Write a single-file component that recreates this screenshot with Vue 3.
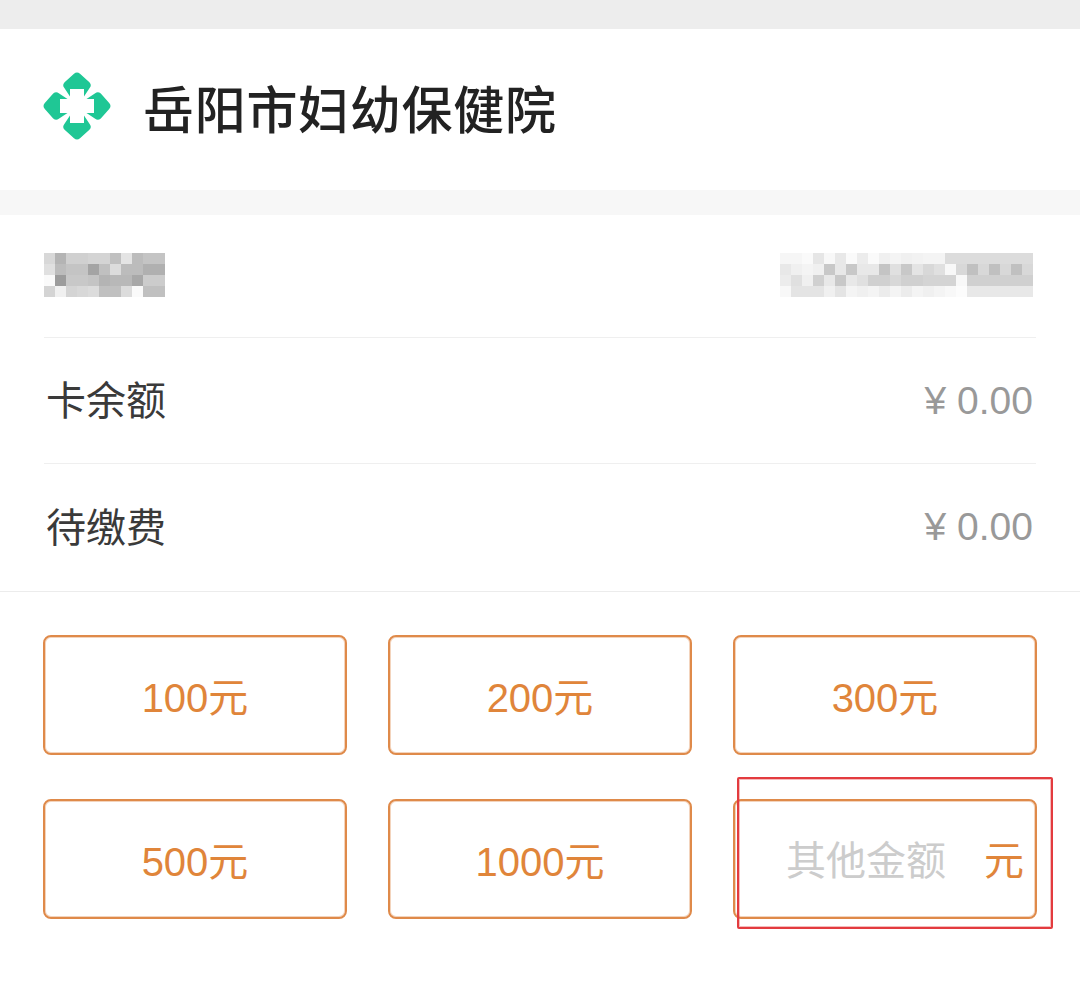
<script setup>
const leftMosaic = [
  ['d8','b4','d0','d0','d4','d4','c0','e4','bc','c4','c4'],
  ['e0','bc','c4','c4','a4','c0','dc','bc','bc','b0','b0'],
  ['fa','9c','c8','c8','c4','b4','b8','b8','a8','cc','cc'],
  ['d4','f0','d4','d8','dc','c0','c0','dc','fa','c0','c0'],
]
const rightMosaic = [
  ['f6','f6','fa','e6','f8','e8','fa','ec','fa','f0','f4','f0','f2','f4','f4','dc','dc','dc','dc','dc','dc','dc','dc'],
  ['e8','f0','f4','f0','c8','e8','c8','e8','e8','c4','e0','c8','e4','d8','e0','f8','d8','c0','d8','c0','d8','c0','d8'],
  ['ec','e0','f0','d0','e8','c8','e8','e0','d0','d0','d8','d0','d0','d4','d4','d4','f8','d0','d0','d0','d0','d0','d0'],
  ['f8','e4','e4','e4','f0','e4','f4','f0','f4','ec','f4','ec','f4','f0','f4','f8','fc','e8','e8','e8','e8','e8','e8'],
]
const amounts = ['100元', '200元', '300元', '500元', '1000元']
const petalAngles = [0, 90, 180, 270]
const cellColor = (v) => '#' + v + v + v
</script>

<template>
  <div class="page">
    <div class="topbar"></div>
    <header class="hospital">
      <svg class="logo" viewBox="0 0 80 80" aria-hidden="true">
        <path
          v-for="a in petalAngles"
          :key="a"
          :transform="`rotate(${a} 40 40)`"
          d="M40 6.5 Q41.6 6.5 43 7.8 L52.4 16.2 Q55 19 52.8 21.8 L47 30.5 L47 23 L33 23 L33 30.5 L27.2 21.8 Q25 19 27.6 16.2 L37 7.8 Q38.4 6.5 40 6.5 Z"
          fill="#1fc795"
        />
      </svg>
      <h1 class="name">岳阳市妇幼保健院</h1>
    </header>
    <div class="band"></div>
    <section class="info">
      <div class="row first">
        <div class="mosaic">
          <div v-for="(r, i) in leftMosaic" :key="i" class="mrow">
            <i v-for="(c, j) in r" :key="j" class="cell" :style="{ background: cellColor(c) }"></i>
          </div>
        </div>
        <div class="mosaic">
          <div v-for="(r, i) in rightMosaic" :key="i" class="mrow">
            <i v-for="(c, j) in r" :key="j" class="cell" :style="{ background: cellColor(c) }"></i>
          </div>
        </div>
      </div>
      <div class="row">
        <span class="label">卡余额</span>
        <span class="value">¥ 0.00</span>
      </div>
      <div class="row last">
        <span class="label">待缴费</span>
        <span class="value">¥ 0.00</span>
      </div>
    </section>
    <section class="amounts">
      <button v-for="a in amounts" :key="a" class="amount" type="button">{{ a }}</button>
      <div class="amount custom">
        <span class="placeholder">其他金额</span>
        <span class="unit">元</span>
        <div class="highlight"></div>
      </div>
    </section>
  </div>
</template>

<style>
html, body { margin: 0; background: #fff; }
</style>

<style scoped>
.page {
  width: 1080px;
  height: 985px;
  background: #fff;
  overflow: hidden;
  font-family: "Liberation Sans", "Noto Sans CJK SC", sans-serif;
}
.topbar { height: 29px; background: #ededed; }
.hospital {
  height: 161px;
  display: flex;
  align-items: center;
  padding: 0 0 7px 37px;
  box-sizing: border-box;
}
.logo { width: 80px; height: 80px; flex: none; }
.name {
  margin: 2px 0 0 26px;
  font-family: "Noto Sans CJK SC", sans-serif;
  font-size: 51px;
  font-weight: 500;
  letter-spacing: 0.7px;
  color: #222;
  line-height: 1;
}
.band { height: 25px; background: #f7f7f7; }
.info { border-bottom: 1px solid #ececec; }
.row {
  height: 126px;
  margin: 0 44px;
  box-sizing: border-box;
  display: flex;
  align-items: center;
  justify-content: space-between;
  border-bottom: 1px solid #efefef;
}
.row.first { height: 123px; padding: 0 3px 2px 0; }
.row.last { height: 127px; border-bottom: none; }
.mosaic { display: flex; flex-direction: column; }
.mrow { display: flex; }
.cell { display: block; width: 11px; height: 11px; }
.label {
  margin: 0 0 5px 2px;
  font-family: "Noto Sans CJK SC", sans-serif;
  font-size: 40px;
  color: #3a3a3a;
}
.value {
  margin: 0 3px 0 0;
  font-size: 39px;
  color: #999;
}
.row.last .value { margin-bottom: 2px; }
.amounts {
  display: grid;
  grid-template-columns: repeat(3, 304px);
  column-gap: 41px;
  row-gap: 44px;
  padding: 43px 0 0 43px;
}
.amount {
  position: relative;
  height: 120px;
  box-sizing: border-box;
  border: 2px solid #df8a4a;
  box-shadow: inset 0 0 0 1px rgba(224, 147, 90, 0.4);
  border-radius: 8px;
  background: #fff;
  color: #e0853a;
  font-family: "Liberation Sans", "Noto Sans CJK SC", sans-serif;
  font-size: 40px;
  display: flex;
  align-items: center;
  justify-content: center;
  padding: 0;
}
.custom { justify-content: flex-start; }
.placeholder {
  margin: 0 0 2px 51px;
  font-family: "Noto Sans CJK SC", sans-serif;
  font-size: 40px;
  color: #ccc;
}
.unit {
  margin: 0 0 2px 38px;
  font-family: "Noto Sans CJK SC", sans-serif;
  font-size: 40px;
  color: #e0853a;
}
.highlight {
  position: absolute;
  left: 2px;
  top: -24px;
  width: 316px;
  height: 152px;
  box-sizing: border-box;
  border: 2px solid #e33b3e;
  box-shadow: inset 0 0 0 1px rgba(227, 59, 62, 0.35);
  border-radius: 2px;
  pointer-events: none;
}
</style>
